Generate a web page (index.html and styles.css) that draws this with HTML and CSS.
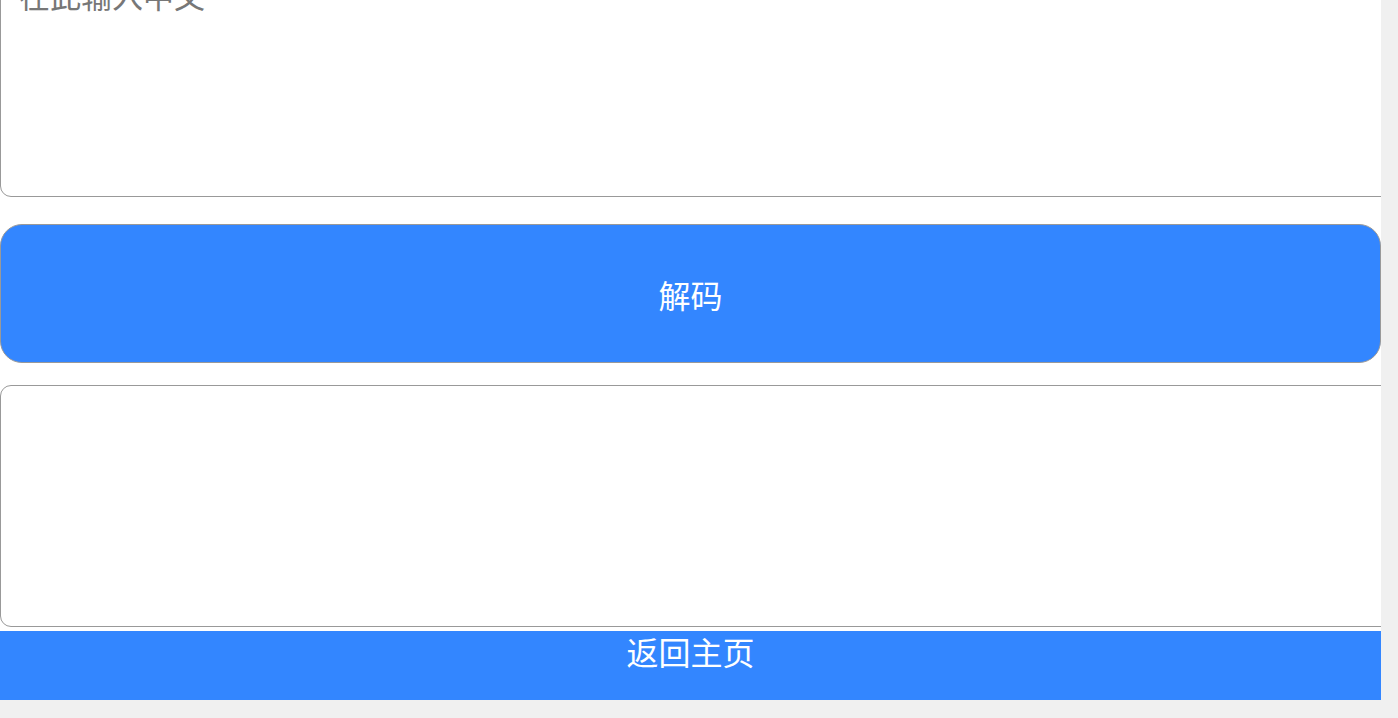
FILE: index.html
```html
<!DOCTYPE html>
<html lang="zh-CN">
<head>
<meta charset="utf-8">
<title>解码</title>
<link rel="stylesheet" href="styles.css">
</head>
<body>
<div class="viewport">
  <div class="page">
    <textarea class="field field-input" placeholder="在此输入中文"></textarea>
    <button class="decode-btn" type="button">解码</button>
    <textarea class="field field-output"></textarea>
    <a class="home-bar" href="#">返回主页</a>
  </div>
</div>
</body>
</html>
```

FILE: styles.css
```css
html, body {
  margin: 0;
  padding: 0;
}

body {
  background: #f0f0f0;
  height: 718px;
  overflow: hidden;
  font-family: "Noto Sans CJK SC", "Noto Sans", sans-serif;
}

.viewport {
  width: 1381px;
  height: 700px;
  overflow: hidden;
  background: #ffffff;
}

.page {
  margin-top: -39px;
}

.field {
  display: block;
  box-sizing: content-box;
  width: 100%;
  padding: 10px 18px;
  margin: 0;
  border: 1px solid #999;
  border-radius: 11px;
  font-family: "Noto Sans CJK SC", sans-serif;
  font-size: 31px;
  color: #333;
  background: #fff;
  resize: none;
  outline: none;
}

.field::placeholder {
  color: #777;
}

.field-input {
  height: 214px;
}

.field-output {
  height: 220px;
  margin-top: 22px;
}

.decode-btn {
  display: block;
  box-sizing: border-box;
  width: 100%;
  height: 139px;
  margin: 27px 0 0;
  border: 1px solid #999;
  border-radius: 22px;
  background: #3386ff;
  color: #fff;
  font-family: "Noto Sans CJK SC", sans-serif;
  font-size: 32px;
  cursor: pointer;
}

.home-bar {
  display: block;
  margin-top: 4px;
  height: 69px;
  box-sizing: border-box;
  padding-top: 4px;
  background: #3386ff;
  color: #fff;
  text-align: center;
  text-decoration: none;
  font-size: 32px;
  line-height: 32px;
}
```
